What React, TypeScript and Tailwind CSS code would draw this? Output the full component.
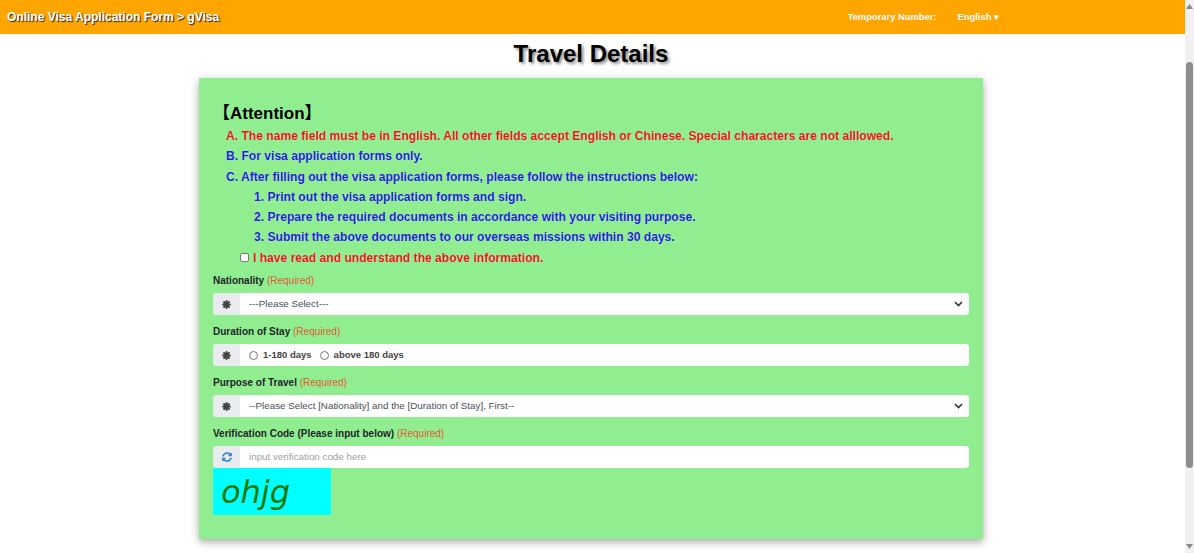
import { FaSyncAlt } from 'react-icons/fa'

const FONT = "font-['Liberation_Sans','Noto_Sans_CJK_SC',Arial,sans-serif]"

function Chevron() {
  return (
    <svg width="9" height="6" viewBox="0 0 9 6" className="shrink-0">
      <path d="M1 1l3.5 3.5L8 1" fill="none" stroke="#333" strokeWidth="1.6" />
    </svg>
  )
}

// bold eight-spoke asterisk used in the field addons
function Star() {
  return (
    <svg width="9" height="9" viewBox="0 0 10 10">
      <g stroke="#444" strokeWidth="2.3" strokeLinecap="round">
        <path d="M5 1.2v7.6M1.2 5h7.6M2.3 2.3l5.4 5.4M7.7 2.3l-5.4 5.4" />
      </g>
      <circle cx="5" cy="5" r="2.2" fill="#444" />
    </svg>
  )
}

function Label({ text }: { text: string }) {
  return (
    <div className="mb-[4px] text-[10px] leading-[16px] text-[#212529]">
      <span className="font-bold">{text}</span>{' '}
      <span className="text-[#e25a33]">(Required)</span>
    </div>
  )
}

function Group({ icon, children }: { icon: React.ReactNode; children: React.ReactNode }) {
  return (
    <div className="flex h-[22px] overflow-hidden rounded-[3px]">
      <div className="flex w-[27px] shrink-0 items-center justify-center bg-[#e9ecef]">{icon}</div>
      <div className="flex flex-1 items-center bg-white pl-[9px] pr-[6px] text-[9.8px] text-[#495057]">{children}</div>
    </div>
  )
}

function Radio({ label }: { label: string }) {
  return (
    <span className="mr-[8px] flex items-center gap-[5px] text-[9.5px] font-bold text-[#444]">
      <span className="h-[9px] w-[9px] rounded-full border border-[#777] bg-white" />
      {label}
    </span>
  )
}

export default function App() {
  return (
    <div className={`flex h-[553px] overflow-hidden bg-white ${FONT}`}>
      <div className="min-w-0 flex-1">
        <header className="flex h-[34px] items-center bg-[#ffa500] pl-[7px] text-white">
          <span className="text-[12px] font-bold [text-shadow:1px_1px_1px_#222]">
            Online Visa Application Form &gt; gVisa
          </span>
          <span className="ml-auto text-[9.4px] font-bold">Temporary Number:</span>
          <span className="ml-[21px] mr-[186px] text-[9.4px] font-bold">English ▾</span>
        </header>

        <div className="pr-[3px]">
          <h1 className="mt-[5px] text-center text-[24px] font-bold leading-[30px] text-black [text-shadow:2px_2px_3px_#888]">
            Travel Details
          </h1>

          <div className="mx-auto mt-[9px] w-[784px] bg-[#90ee90] px-[14px] pb-[24px] pt-[24px] shadow-[0_3px_8px_rgba(0,0,0,0.35)]">
            <div className="text-[17px] font-bold leading-[24px] text-black">【Attention】</div>
            <div className="text-[12.1px] font-bold leading-[20.3px] [text-shadow:0_0_1px_rgba(255,255,255,0.6)]">
              <p className="pl-[13px] text-[#e8161a]">
                A. The name field must be in English. All other fields accept English or Chinese. Special characters are not alllowed.
              </p>
              <p className="pl-[13px] text-[#1c24d8]">B. For visa application forms only.</p>
              <p className="pl-[13px] text-[#1c24d8]">C. After filling out the visa application forms, please follow the instructions below:</p>
              <p className="pl-[41px] text-[#1c24d8]">1. Print out the visa application forms and sign.</p>
              <p className="pl-[41px] text-[#1c24d8]">2. Prepare the required documents in accordance with your visiting purpose.</p>
              <p className="pl-[41px] text-[#1c24d8]">3. Submit the above documents to our overseas missions within 30 days.</p>
              <label className="flex items-center pl-[27px] text-[#e8161a]">
                <span className="mr-[4px] h-[9px] w-[9px] rounded-[2px] border border-[#777] bg-white" />
                I have read and understand the above information.
              </label>
            </div>

            <div className="mt-[5px]">
              <div className="mb-[9px]">
                <Label text="Nationality" />
                <Group icon={<Star />}>
                  <span className="flex-1">---Please Select---</span>
                  <Chevron />
                </Group>
              </div>
              <div className="mb-[9px]">
                <Label text="Duration of Stay" />
                <Group icon={<Star />}>
                  <Radio label="1-180 days" />
                  <Radio label="above 180 days" />
                </Group>
              </div>
              <div className="mb-[9px]">
                <Label text="Purpose of Travel" />
                <Group icon={<Star />}>
                  <span className="flex-1">--Please Select [Nationality] and the [Duration of Stay], First--</span>
                  <Chevron />
                </Group>
              </div>
              <Label text="Verification Code (Please input below)" />
              <Group icon={<FaSyncAlt className="text-[10px] text-[#2f7fd6]" />}>
                <span className="text-[#9aa0a6]">input verification code here</span>
              </Group>
              <div className="flex h-[47px] w-[118px] items-center bg-[#00ffff] pl-[8px] font-['DejaVu_Sans',sans-serif] text-[32px] italic text-[#0b7a0b]">
                ohjg
              </div>
            </div>
          </div>
        </div>
      </div>

      {/* scrollbar track */}
      <div className="flex w-[9px] shrink-0 flex-col items-center bg-[#f1f1f1]">
        <svg width="7" height="5" viewBox="0 0 7 5" className="mt-[4px]">
          <path d="M3.5 0L7 5H0z" fill="#8a8a8a" />
        </svg>
        <div className="mt-[53px] h-[406px] w-[7px] rounded-[4px] bg-[#8d8d8d]" />
        <div className="flex-1" />
        <svg width="7" height="5" viewBox="0 0 7 5" className="mb-[4px]">
          <path d="M0 0h7L3.5 5z" fill="#8a8a8a" />
        </svg>
      </div>
    </div>
  )
}
